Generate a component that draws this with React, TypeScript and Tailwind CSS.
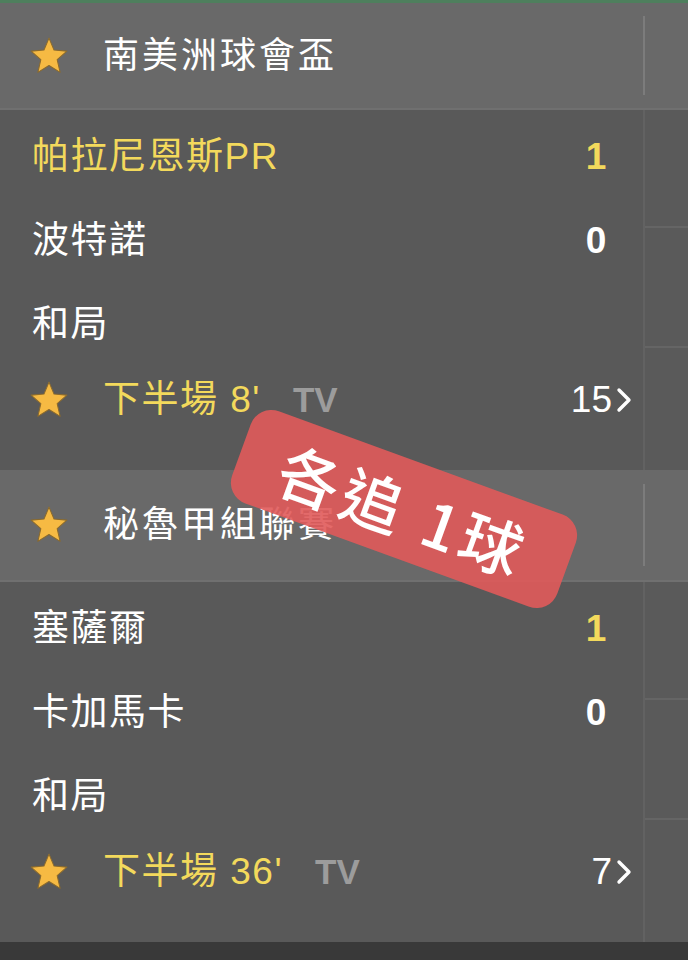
import React from "react";

const FONT = { fontFamily: '"Liberation Sans", "Noto Sans CJK TC", sans-serif' };

function Star() {
  return (
    <svg width="42" height="40" viewBox="0 0 24 23" className="shrink-0">
      <polygon
        points="12,1.2 14.9,8.1 22.3,8.7 16.7,13.6 18.4,20.9 12,17 5.6,20.9 7.3,13.6 1.7,8.7 9.1,8.1"
        fill="#f6ba43"
        stroke="#8a6a2e"
        strokeWidth="0.6"
        strokeLinejoin="round"
      />
    </svg>
  );
}

function Chevron() {
  return (
    <svg width="16" height="26" viewBox="0 0 16 26" className="ml-[4px]">
      <polyline points="3,3 13,13 3,23" fill="none" stroke="#ffffff" strokeWidth="3.4" strokeLinecap="round" strokeLinejoin="round" />
    </svg>
  );
}

function Header({ title, h }: { title: string; h: string }) {
  return (
    <div className={`flex ${h} bg-[#696969] border-b-2 border-[#707070]`}>
      <div className="flex flex-1 items-center pl-[28px]">
        <Star />
        <span className="ml-[33px] text-[36px] tracking-[3px] text-white">{title}</span>
      </div>
      <div className="flex w-[45px] items-center">
        <div className="h-[75%] w-[2px] bg-[#7c7c7c]" />
      </div>
    </div>
  );
}

type Row = { name: string; score?: string; hlName?: boolean; hlScore?: boolean };

function TeamRow({ name, score, hlName, hlScore }: Row) {
  return (
    <div className="flex h-[84px] items-center">
      <span className={`flex-1 pl-[32px] text-[37px] tracking-[1.5px] ${hlName ? "text-[#f3d95c]" : "text-white"}`}>{name}</span>
      {score !== undefined && (
        <span className={`w-[60px] mr-[17px] text-center text-[37px] font-bold ${hlScore ? "text-[#f3d95c]" : "text-white"}`}>{score}</span>
      )}
    </div>
  );
}

function Body({ rows, time, count }: { rows: Row[]; time: string; count: string }) {
  return (
    <div className="flex h-[360px] bg-[#595959]">
      <div className="flex flex-1 flex-col pt-[5px]">
        {rows.map((r, i) => (
          <TeamRow key={i} {...r} />
        ))}
        <div className="flex h-[66px] items-center pl-[28px] pr-[11px]">
          <Star />
          <span className="ml-[33px] text-[37px] tracking-[1.5px] text-[#f3d95c]">{time}</span>
          <span className="ml-[32px] text-[35px] font-bold text-[#9c9c9c]">TV</span>
          <span className="ml-auto flex items-center text-[37px] text-white">
            {count}
            <Chevron />
          </span>
        </div>
      </div>
      <div className="flex w-[45px] flex-col border-l-2 border-[#626262] bg-[#5a5a5a]">
        <div className="h-[118px] border-b-2 border-[#656565]" />
        <div className="h-[120px] border-b-2 border-[#656565]" />
        <div className="flex-1" />
      </div>
    </div>
  );
}

export default function App() {
  return (
    <div className="relative h-[960px] w-[688px] overflow-hidden bg-[#393939]" style={FONT}>
      <div className="h-[3px] bg-[#4e7f5d]" />
      <Header title="南美洲球會盃" h="h-[107px]" />
      <Body
        rows={[
          { name: "帕拉尼恩斯PR", score: "1", hlName: true, hlScore: true },
          { name: "波特諾", score: "0" },
          { name: "和局" },
        ]}
        time="下半場 8'"
        count="15"
      />
      <Header title="秘魯甲組聯賽" h="h-[112px]" />
      <Body
        rows={[
          { name: "塞薩爾", score: "1", hlScore: true },
          { name: "卡加馬卡", score: "0" },
          { name: "和局" },
        ]}
        time="下半場 36'"
        count="7"
      />
      <div className="absolute left-[231px] top-[460px] flex h-[98px] w-[346px] rotate-[20deg] items-center justify-center rounded-[22px] bg-[#e05a5a]/90">
        <span className="text-[62px] font-medium tracking-[5px] text-white" style={{ fontFamily: '"Noto Sans CJK TC", sans-serif' }}>
          各追 1球
        </span>
      </div>
    </div>
  );
}
